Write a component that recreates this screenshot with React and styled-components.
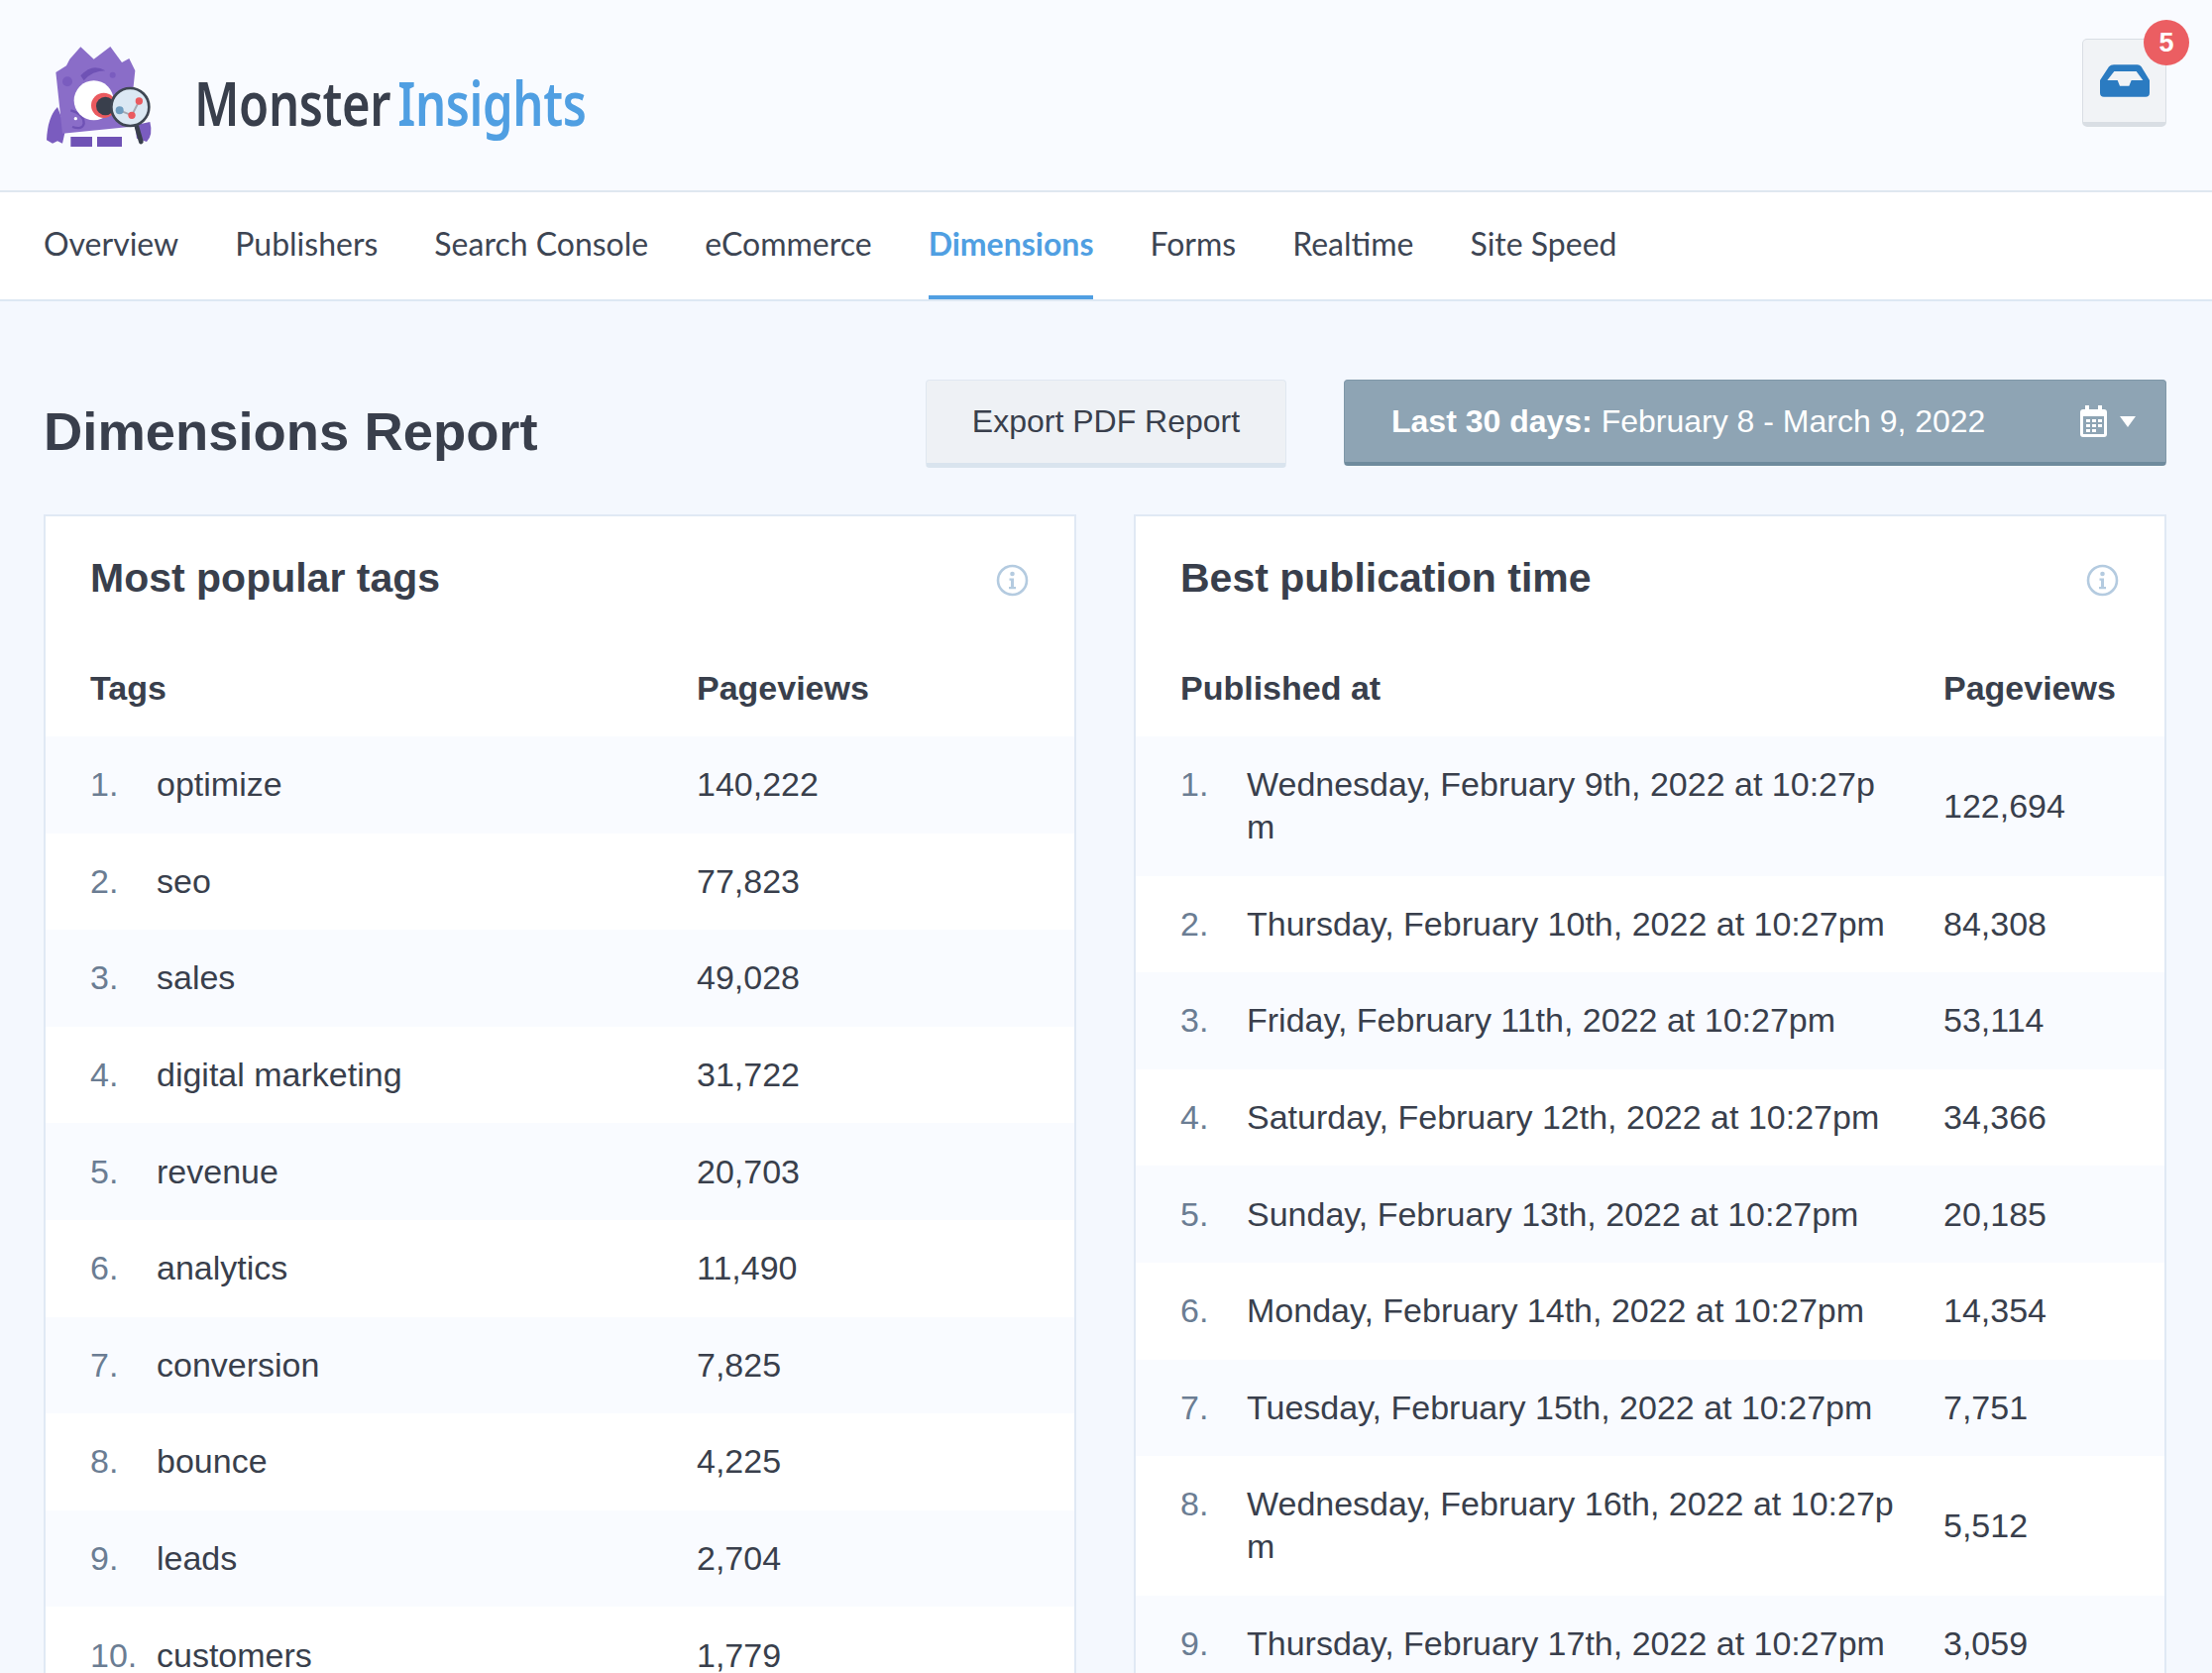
import React from "react";
import styled, { createGlobalStyle } from "styled-components";

const Global = createGlobalStyle`
  html, body { margin: 0; padding: 0; height: 1688px; overflow: hidden; background: #f4f8fe; }
  #root { height: 1688px; overflow: hidden; }
  * { box-sizing: border-box; }
`;
const Page = styled.div`
  width: 2232px; min-height: 1688px; background: #f4f8fe; color: #393f4c;
  font-family: "Liberation Sans", Arial, sans-serif;
`;
const Header = styled.header`
  height: 194px; background: #f9fbff; border-bottom: 2px solid #dfe7f0;
  display: flex; align-items: flex-start; justify-content: space-between; padding: 39px 46px 0 43px;
`;
const Brand = styled.div`display: flex; align-items: center; gap: 33px; margin-top: 4px;`;
const Wordmark = styled.div`
  font-family: "Noto Sans", sans-serif; font-weight: 600; font-size: 62px; line-height: 104px;
  letter-spacing: -0.5px; transform: scaleX(0.79); transform-origin: left center; white-space: nowrap; color: #393f4c;
`;
const Accent = styled.span`color: #509fe2; margin-left: 9px;`;
const InboxButton = styled.button`
  position: relative; width: 85px; height: 89px; padding: 0; background: #f1f3f6;
  border: 1px solid #d9dee4; border-bottom-width: 5px; border-radius: 5px;
  display: flex; align-items: center; justify-content: center;
`;
const Badge = styled.span`
  position: absolute; top: -20px; right: -24px; width: 46px; height: 46px; border-radius: 50%;
  background: #eb5e62; color: #fff; font: bold 27px/46px "Liberation Sans", sans-serif; text-align: center;
`;
const Nav = styled.nav`
  height: 110px; background: #fff; border-bottom: 2px solid #dde8f3; display: flex; gap: 57px; padding-left: 44px;
`;
const Tab = styled.a`
  font-family: Lato, sans-serif; font-size: 32px; line-height: 104px; height: 108px; color: ${p => p.$active ? "#509fe2" : "#3d4553"};
  font-weight: ${p => p.$active ? 700 : 400}; border-bottom: 4px solid ${p => p.$active ? "#509fe2" : "transparent"};
`;
const Main = styled.main`padding: 79px 46px 0 44px;`;
const Toolbar = styled.div`display: flex; align-items: flex-start; height: 89px; margin-bottom: 47px;`;
const Title = styled.h1`margin: 22px 0 0; flex: 1; font-size: 54.4px; line-height: 62px; font-weight: 700; color: #393f4c;`;
const ExportButton = styled.button`
  width: 364px; height: 89px; margin-right: 58px; background: #eef1f5; color: #393f4c; border: 1px solid #e0e8f1;
  border-bottom: 5px solid #d9e4ee; border-radius: 4px; font: 32px "Liberation Sans", sans-serif;
`;
const DateButton = styled.button`
  width: 830px; height: 87px; padding: 0 30px 0 47px; background: #8ea4b4; color: #fff; border: 1px solid #7f98a9;
  border-bottom: 4px solid #6f8b9d; border-radius: 4px; display: flex; align-items: center; justify-content: space-between;
  font: 32px "Liberation Sans", sans-serif;
`;
const DateIcons = styled.span`display: flex; align-items: center; gap: 13px;`;
const Caret = styled.span`width: 0; height: 0; border-left: 8px solid transparent; border-right: 8px solid transparent; border-top: 11px solid #fff;`;
const Grid = styled.div`display: grid; grid-template-columns: 1042px 1042px; gap: 58px;`;
const Card = styled.section`background: #fff; border: 2px solid #e0e9f4; border-bottom: 0;`;
const CardHead = styled.div`display: flex; align-items: flex-start; justify-content: space-between; padding: 37px 46px 0 45px;`;
const CardTitle = styled.h2`margin: 0; font-size: 41px; line-height: 50px; font-weight: 700; color: #393f4c;`;
const InfoWrap = styled.span`display: block; height: 33px; margin-top: 11px;`;
const Row = styled.div`
  display: grid; grid-template-columns: ${p => p.$cols}; padding: ${p => p.$head ? "65px 46px 27px 45px" : "27.3px 46px 27.3px 45px"};
  background: ${p => p.$head ? "transparent" : p.$odd ? "#f9fbff" : "#fff"}; font-size: 34px; line-height: 43px; align-items: center;
`;
const HeadCell = styled.div`font-weight: 700; color: #393f4c; grid-column: ${p => p.$span || "auto"};`;
const Num = styled.div`color: #6b7d93; align-self: start;`;
const Name = styled.div`word-break: break-all; padding-right: ${p => p.$pad || 0}px;`;
const Value = styled.div``;

const Info = () => (
  <svg width="33" height="33" viewBox="0 0 33 33" fill="none">
    <circle cx="16.5" cy="16.5" r="14.5" stroke="#b4cbe0" strokeWidth="2.6" />
    <circle cx="16.5" cy="10" r="2.3" fill="#b4cbe0" />
    <path d="M13.5 14.5h4.5v8.5h2v2.2h-7v-2.2h2v-6.3h-1.5z" fill="#b4cbe0" />
  </svg>
);
const Inbox = () => (
  <svg width="50" height="33" viewBox="0 0 150 97">
    <path fillRule="evenodd" fill="#2b7bc1" d="M42 0H113Q120 0 125 6L150 47V85Q150 97 138 97H12Q0 97 0 85V47L27 6Q32 0 42 0ZM43 20L22 47H53L60 64H88L95 47H130L110 20Z" />
  </svg>
);
const Calendar = () => (
  <svg width="27" height="32" viewBox="0 0 27 32" fill="#fff">
    <path fillRule="evenodd" d="M5 0h4v4h9V0h4v4h2q3 0 3 3v22q0 3-3 3H3q-3 0-3-3V7q0-3 3-3h2zM3 11v18h21V11z" />
    <path d="M6 14h4v3H6zM12 14h4v3h-4zM18 14h4v3h-4zM6 19h4v3H6zM12 19h4v3h-4zM18 19h4v3h-4zM6 24h4v3H6zM12 24h4v3h-4z" />
  </svg>
);
const Monster = () => (
  <svg width="120" height="120" viewBox="0 0 360 360">
    <path fill="#7a5cbf" d="M45 195Q15 225 12 295L30 305L45 298L60 305L70 260z" />
    <path fill="#8a6dc8" d="M40 90L72 70L82 50L115 13L155 50L205 12L240 60L262 48L280 85L262 255L60 275z" />
    <path fill="#6f52b5" d="M85 285h65v30H85zM165 285h75v30h-75zM115 100Q150 60 190 85Q150 85 125 115z" />
    <circle cx="75" cy="118" r="15" fill="#7a5cbf" />
    <circle cx="212" cy="98" r="9" fill="#7a5cbf" />
    <path fill="none" stroke="#6f52b5" strokeWidth="7" d="M85 205Q125 215 125 245Q120 265 90 255" />
    <circle cx="100" cy="230" r="5" fill="#fff" />
    <circle cx="155" cy="175" r="60" fill="#fff" />
    <circle cx="185" cy="190" r="38" fill="#ea5a5f" />
    <circle cx="190" cy="192" r="28" fill="#393f4c" />
    <path fill="#7a5cbf" d="M280 250L325 240Q335 280 315 300L285 290z" />
    <path stroke="#393f4c" strokeWidth="14" strokeLinecap="round" d="M285 255L298 300" />
    <circle cx="265" cy="195" r="57" fill="#dbe8f3" stroke="#3f4753" strokeWidth="8" />
    <path fill="none" stroke="#a5aab3" strokeWidth="6" d="M233 205L270 220L292 177" />
    <circle cx="233" cy="205" r="12" fill="#6f9dc0" />
    <circle cx="270" cy="220" r="11" fill="#ea5a5f" />
    <circle cx="292" cy="177" r="11" fill="#ea5a5f" />
  </svg>
);

const tags = ["optimize:140,222","seo:77,823","sales:49,028","digital marketing:31,722","revenue:20,703","analytics:11,490","conversion:7,825","bounce:4,225","leads:2,704","customers:1,779"];
const times = [
  ["Wednesday, February 9th, 2022 at 10:27pm","122,694"],["Thursday, February 10th, 2022 at 10:27pm","84,308"],
  ["Friday, February 11th, 2022 at 10:27pm","53,114"],["Saturday, February 12th, 2022 at 10:27pm","34,366"],
  ["Sunday, February 13th, 2022 at 10:27pm","20,185"],["Monday, February 14th, 2022 at 10:27pm","14,354"],
  ["Tuesday, February 15th, 2022 at 10:27pm","7,751"],["Wednesday, February 16th, 2022 at 10:27pm","5,512"],
  ["Thursday, February 17th, 2022 at 10:27pm","3,059"],
];
const tabs = ["Overview","Publishers","Search Console","eCommerce","Dimensions","Forms","Realtime","Site Speed"];
const LEFT = "67px 1fr 335px";
const RIGHT = "67px 1fr 177px";

function Report({ title, head, rows, cols, pad }) {
  return (
    <Card>
      <CardHead><CardTitle>{title}</CardTitle><InfoWrap><Info /></InfoWrap></CardHead>
      <Row $head $cols={cols}><HeadCell $span="span 2">{head}</HeadCell><HeadCell>Pageviews</HeadCell></Row>
      {rows.map(([name, value], i) => (
        <Row key={name} $odd={i % 2 === 0} $cols={cols}>
          <Num>{i + 1}.</Num><Name $pad={pad}>{name}</Name><Value>{value}</Value>
        </Row>
      ))}
    </Card>
  );
}

export default function App() {
  return (
    <Page>
      <Global />
      <Header>
        <Brand><Monster /><Wordmark>Monster<Accent>Insights</Accent></Wordmark></Brand>
        <InboxButton><Inbox /><Badge>5</Badge></InboxButton>
      </Header>
      <Nav>{tabs.map(t => <Tab key={t} $active={t === "Dimensions"}>{t}</Tab>)}</Nav>
      <Main>
        <Toolbar>
          <Title>Dimensions Report</Title>
          <ExportButton>Export PDF Report</ExportButton>
          <DateButton>
            <span><b>Last 30 days:</b> February 8 - March 9, 2022</span>
            <DateIcons><Calendar /><Caret /></DateIcons>
          </DateButton>
        </Toolbar>
        <Grid>
          <Report title="Most popular tags" head="Tags" cols={LEFT} rows={tags.map(t => t.split(":"))} />
          <Report title="Best publication time" head="Published at" cols={RIGHT} pad={43} rows={times} />
        </Grid>
      </Main>
    </Page>
  );
}
